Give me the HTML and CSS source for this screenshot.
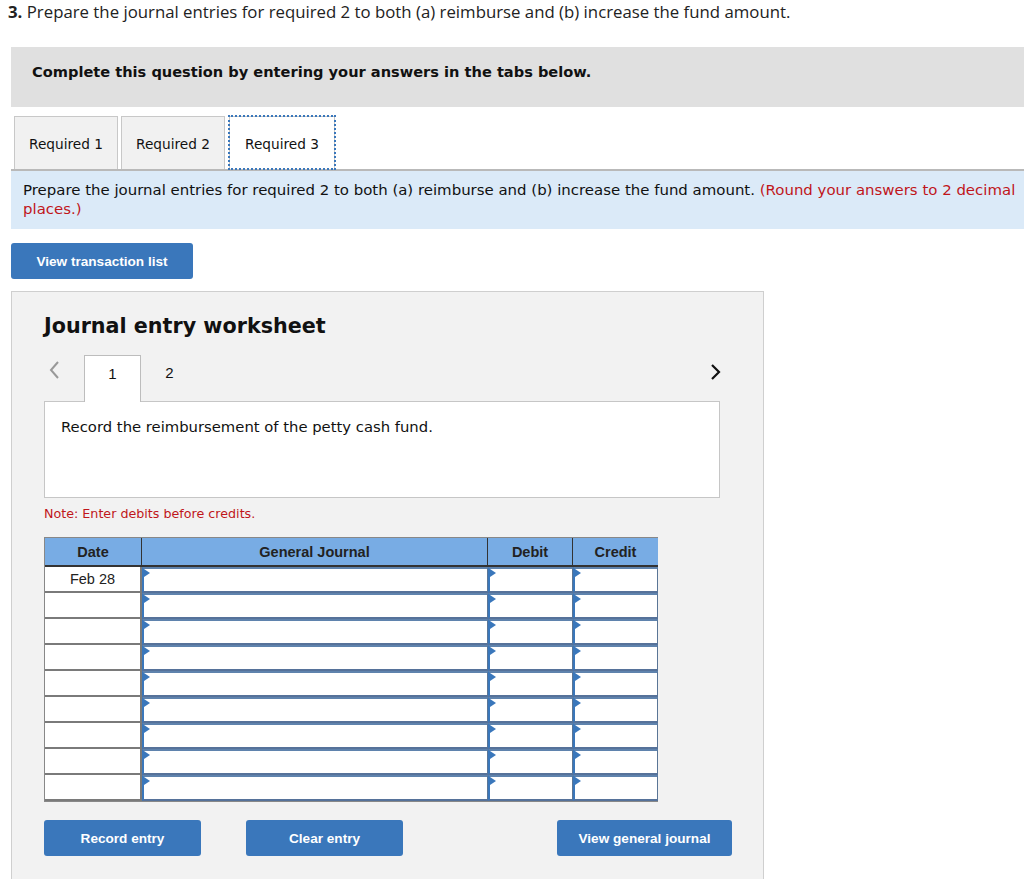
FILE: index.html
```html
<!DOCTYPE html>
<html>
<head>
<meta charset="utf-8">
<link rel="stylesheet" href="styles.css">
</head>
<body>
<p class="q"><b>3.</b> Prepare the journal entries for required 2 to both (a) reimburse and (b) increase the fund amount.</p>
<div class="instr">Complete this question by entering your answers in the tabs below.</div>
<div class="tabs">
  <div class="tab">Required 1</div>
  <div class="tab">Required 2</div>
  <div class="tab active">Required 3</div>
</div>
<div class="prompt">Prepare the journal entries for required 2 to both (a) reimburse and (b) increase the fund amount. <span class="red">(Round your answers to 2 decimal places.)</span></div>
<button class="btn vtl">View transaction list</button>
<div class="panel">
  <h2>Journal entry worksheet</h2>
  <div class="nav">
    <span class="arrow prev"><svg width="12" height="20" viewBox="0 0 12 20"><path d="M10 2 L3 10 L10 18" fill="none" stroke="#999" stroke-width="2"/></svg></span>
    <div class="ntab on">1</div>
    <div class="ntab">2</div>
    <span class="arrow next"><svg width="12" height="18" viewBox="0 0 12 18"><path d="M2 2 L9 9 L2 16" fill="none" stroke="#111" stroke-width="2.2"/></svg></span>
  </div>
  <div class="desc">Record the reimbursement of the petty cash fund.</div>
  <div class="note">Note: Enter debits before credits.</div>
  <div class="grid">
    <div class="h">Date</div><div class="h">General Journal</div><div class="h">Debit</div><div class="h">Credit</div>
    <div class="d">Feb 28</div><div class="i"></div><div class="i"></div><div class="i"></div>
    <div class="d"></div><div class="i"></div><div class="i"></div><div class="i"></div>
    <div class="d"></div><div class="i"></div><div class="i"></div><div class="i"></div>
    <div class="d"></div><div class="i"></div><div class="i"></div><div class="i"></div>
    <div class="d"></div><div class="i"></div><div class="i"></div><div class="i"></div>
    <div class="d"></div><div class="i"></div><div class="i"></div><div class="i"></div>
    <div class="d"></div><div class="i"></div><div class="i"></div><div class="i"></div>
    <div class="d"></div><div class="i"></div><div class="i"></div><div class="i"></div>
    <div class="d"></div><div class="i"></div><div class="i"></div><div class="i"></div>
  </div>
  <div class="actions">
    <button class="btn b1">Record entry</button>
    <button class="btn b2">Clear entry</button>
    <button class="btn b3">View general journal</button>
  </div>
</div>
</body>
</html>
```
FILE: styles.css
```css
html, body { margin: 0; padding: 0; background: #fff; overflow: hidden; }
body { font-family: "DejaVu Sans", Verdana, sans-serif; color: #111; width: 1024px; height: 879px; }
.q { margin: 0; padding: 2px 0 0 8px; font-family: "Open Sans", "Liberation Sans", Arial, sans-serif; font-size: 16.8px; line-height: 20px; color: #222; white-space: nowrap; }
.q b { font-weight: bold; }
.instr { margin: 25px 0 0 11px; height: 60px; background: #e0e0e0; box-sizing: border-box; padding: 16px 0 0 21px; font-weight: bold; font-size: 14.6px; }
.tabs { display: flex; margin: 9px 0 0 14px; gap: 3px; height: 53px; }
.tab { width: 104px; box-sizing: border-box; border: 1px solid #c8c8c8; border-bottom: none; background: #f1f1f1; font-size: 13.7px; display: flex; align-items: center; justify-content: center; padding-top: 2px; }
.tab.active { background: #fff; outline: 2px dotted #3a77bb; outline-offset: -1px; width: 106px; margin-left: 1px; }
.prompt { margin-left: 11px; border-top: 2px solid #b9b9b9; background: #dbeaf8; padding: 10px 0 10px 12px; font-size: 14.95px; line-height: 19px; }
.red { color: #c0161b; }
.btn { border: none; border-radius: 3px; background: #3a77bb; color: #fff; font-family: "Liberation Sans", Arial, sans-serif; font-weight: bold; font-size: 13.6px; cursor: pointer; padding: 0; }
.vtl { display: block; margin: 14px 0 0 11px; width: 182px; height: 36px; }
.panel { margin: 12px 0 0 11px; width: 753px; height: 600px; box-sizing: border-box; border: 1px solid #cfcfcf; border-bottom: none; background: #f2f2f2; padding: 0 0 0 32px; }
h2 { margin: 21px 0 0 0; font-size: 20.7px; line-height: 26px; font-weight: bold; }
.nav { display: flex; align-items: flex-end; margin-top: 16px; height: 46px; width: 675px; position: relative; }
.arrow.prev { position: absolute; left: 4px; top: 5px; }
.arrow.next { position: absolute; right: -3px; top: 8px; }
.ntab { width: 57px; height: 46px; box-sizing: border-box; display: flex; align-items: center; justify-content: center; font-family: "Liberation Sans", Arial, sans-serif; font-size: 15px; padding-bottom: 12px; }
.ntab.on { margin-left: 40px; background: #fff; border: 1px solid #bdbdbd; border-bottom: none; margin-bottom: -1px; height: 47px; position: relative; z-index: 1; }
.desc { width: 676px; height: 97px; box-sizing: border-box; background: #fff; border: 1px solid #c6c6c6; padding: 16px 0 0 16px; font-size: 14.8px; }
.note { color: #c0161b; font-size: 12.7px; margin: 8px 0 0 0; height: 20px; }
.grid { margin-top: 11px; display: grid; grid-template-columns: 97px 346px 85px 85px; grid-template-rows: 29px; grid-auto-rows: 26px; width: 612px; border: 1px solid #888; box-sizing: content-box; background: #7a7a7a; }
.h { background: #78ace4; font-family: "Liberation Sans", Arial, sans-serif; font-weight: bold; font-size: 14.5px; color: #222; display: flex; align-items: center; justify-content: center; border-right: 1px solid #333; border-bottom: 2px solid #333; box-sizing: border-box; }
.h:nth-child(4) { border-right: none; }
.d { background: #fff; border-bottom: 2px solid #7a7a7a; border-right: 2px solid #7a7a7a; box-sizing: border-box; font-family: "Liberation Sans", Arial, sans-serif; font-size: 14.5px; display: flex; align-items: center; justify-content: center; color: #222; }
.i { background: #fff; box-sizing: border-box; border: 1px solid #5a7596; border-top: 2px solid #5f83ad; border-left: 2px solid #3a77bb; border-bottom: 2px solid #56729a; position: relative; }
.i::before { content: ""; position: absolute; left: 0; top: 0; border-left: 6px solid #3a77bb; border-top: 4px solid transparent; border-bottom: 4px solid transparent; }
.actions { display: flex; margin-top: 18px; height: 36px; }
.actions .btn { height: 36px; }
.b1 { width: 157px; }
.b2 { width: 157px; margin-left: 45px; }
.b3 { width: 175px; margin-left: 154px; }
```
